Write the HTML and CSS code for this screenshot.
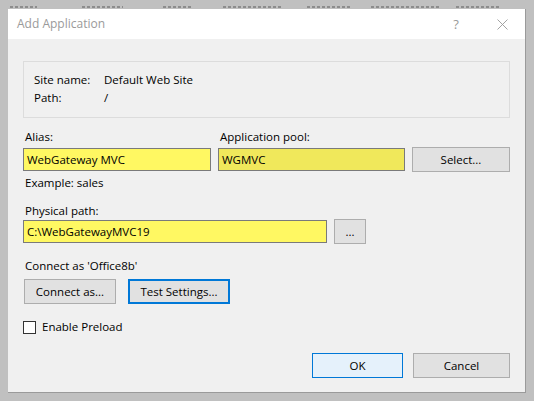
FILE: index.html
```html
<!DOCTYPE html>
<html>
<head>
<meta charset="utf-8">
<link rel="stylesheet" href="styles.css">
</head>
<body>
<div class="bgstrip">
  <span class="seg s1"></span>
  <span class="seg s2"></span>
  <span class="seg s3"></span>
  <span class="seg s4"></span>
  <span class="seg s5"></span>
  <span class="seg s6"></span>
  <span class="seg s7"></span>
</div>
<div class="dialog">
  <div class="titlebar">
    <div class="title">Add Application</div>
    <div class="tb-btn help">?</div>
    <div class="tb-btn close">
      <svg width="11" height="11" viewBox="0 0 11 11"><path d="M0.5 0.5 L10.5 10.5 M10.5 0.5 L0.5 10.5" stroke="#999" stroke-width="0.9" fill="none"/></svg>
    </div>
  </div>
  <div class="content">
    <div class="groupbox">
      <div class="info-row"><span class="info-label">Site name:</span><span>Default Web Site</span></div>
      <div class="info-row"><span class="info-label">Path:</span><span>/</span></div>
    </div>

    <div class="alias-grid">
      <div class="label">Alias:</div>
      <div class="label">Application pool:</div>
      <div></div>
      <div class="input yellow">WebGateway MVC</div>
      <div class="input yellow2">WGMVC</div>
      <div class="btn select">Select...</div>
    </div>

    <div class="text example">Example: sales</div>

    <div class="text phys-label">Physical path:</div>
    <div class="path-row">
      <div class="input yellow path-input">C:\WebGatewayMVC19</div>
      <div class="btn browse">...</div>
    </div>

    <div class="text connect-label">Connect as 'Office8b'</div>
    <div class="connect-row">
      <div class="btn connect">Connect as...</div>
      <div class="btn test focused">Test Settings...</div>
    </div>

    <div class="check-row">
      <span class="checkbox"></span>
      <span>Enable Preload</span>
    </div>

    <div class="footer">
      <div class="btn ok">OK</div>
      <div class="btn cancel">Cancel</div>
    </div>
  </div>
</div>
</body>
</html>
```

FILE: styles.css
```css
html, body {
  margin: 0;
  padding: 0;
}
body {
  background: #c0c0c0;
  width: 534px;
  height: 401px;
  overflow: hidden;
  font-family: "Open Sans", "Liberation Sans", sans-serif;
  font-size: 11.5px;
  color: #000;
}
.bgstrip {
  height: 9px;
  box-sizing: border-box;
  padding-top: 6px;
  display: flex;
}
.seg {
  height: 2px;
  background: repeating-linear-gradient(90deg, #6a6a6a 0 3px, transparent 3px 5px);
  opacity: 0.6;
}
.s1 { margin-left: 10px; width: 27px; }
.s2 { margin-left: 45px; width: 41px; }
.s3 { margin-left: 40px; width: 28px; }
.s4 { margin-left: 32px; width: 60px; }
.s5 { margin-left: 24px; width: 44px; }
.s6 { margin-left: 20px; width: 68px; }
.s7 { margin-left: 17px; width: 44px; }
.dialog {
  margin-left: 8px;
  width: 517px;
  height: 383px;
  background: #f0f0f0;
  border-right: 1px solid #9a9a9a;
  border-bottom: 1px solid #9a9a9a;
  display: flex;
  flex-direction: column;
}
.titlebar {
  height: 30px;
  background: #fff;
  display: flex;
  align-items: center;
}
.title {
  flex: 1;
  padding-left: 9px;
  color: #9a9a9a;
  font-size: 12px;
  line-height: 16px;
}
.tb-btn {
  width: 46px;
  height: 30px;
  display: flex;
  align-items: center;
  justify-content: center;
  color: #999;
}
.help {
  font-size: 13px;
}
.content {
  padding: 0 15px;
  flex: 1;
  display: flex;
  flex-direction: column;
}
.groupbox {
  margin-top: 22px;
  border: 1px solid #dcdcdc;
  padding: 10px 0 11px 10px;
  display: flex;
  flex-direction: column;
  gap: 2px;
}
.info-row {
  line-height: 16px;
  height: 16px;
  display: flex;
}
.info-label {
  width: 70px;
}
.alias-grid {
  margin-top: 11px;
  display: grid;
  grid-template-columns: 188px 187px 98px;
  grid-template-rows: 16px 25px;
  column-gap: 7px;
  row-gap: 2px;
  align-items: center;
}
.label {
  line-height: 16px;
  padding-left: 2px;
}
.input {
  height: 23px;
  box-sizing: border-box;
  border: 1px solid #7a7a7a;
  line-height: 21px;
  padding-left: 3px;
  white-space: nowrap;
  overflow: hidden;
}
.yellow {
  background: #fff862;
}
.yellow2 {
  background: #f0e85b;
}
.btn {
  height: 25px;
  box-sizing: border-box;
  border: 1px solid #adadad;
  background: #e1e1e1;
  display: flex;
  align-items: center;
  justify-content: center;
  white-space: nowrap;
}
.text {
  line-height: 16px;
  padding-left: 2px;
}
.example {
  margin-top: 3px;
}
.phys-label {
  margin-top: 12px;
}
.path-row {
  display: flex;
  align-items: center;
  gap: 7px;
  height: 25px;
}
.path-input {
  width: 304px;
}
.browse {
  width: 32px;
}
.connect-label {
  margin-top: 14px;
}
.connect-row {
  margin-top: 5px;
  display: flex;
  gap: 12px;
  padding-left: 1px;
}
.connect {
  width: 92px;
}
.test {
  width: 102px;
}
.focused {
  border: 2px solid #0078d7;
}
.check-row {
  margin-top: 15px;
  display: flex;
  align-items: center;
  gap: 6px;
  line-height: 16px;
}
.checkbox {
  width: 13px;
  height: 13px;
  box-sizing: border-box;
  border: 1px solid #333;
  background: #fff;
}
.footer {
  margin-top: 18px;
  display: flex;
  justify-content: flex-end;
  gap: 10px;
}
.ok {
  width: 91px;
  background: #e5f1fb;
  border-color: #0078d7;
}
.cancel {
  width: 97px;
}
```
